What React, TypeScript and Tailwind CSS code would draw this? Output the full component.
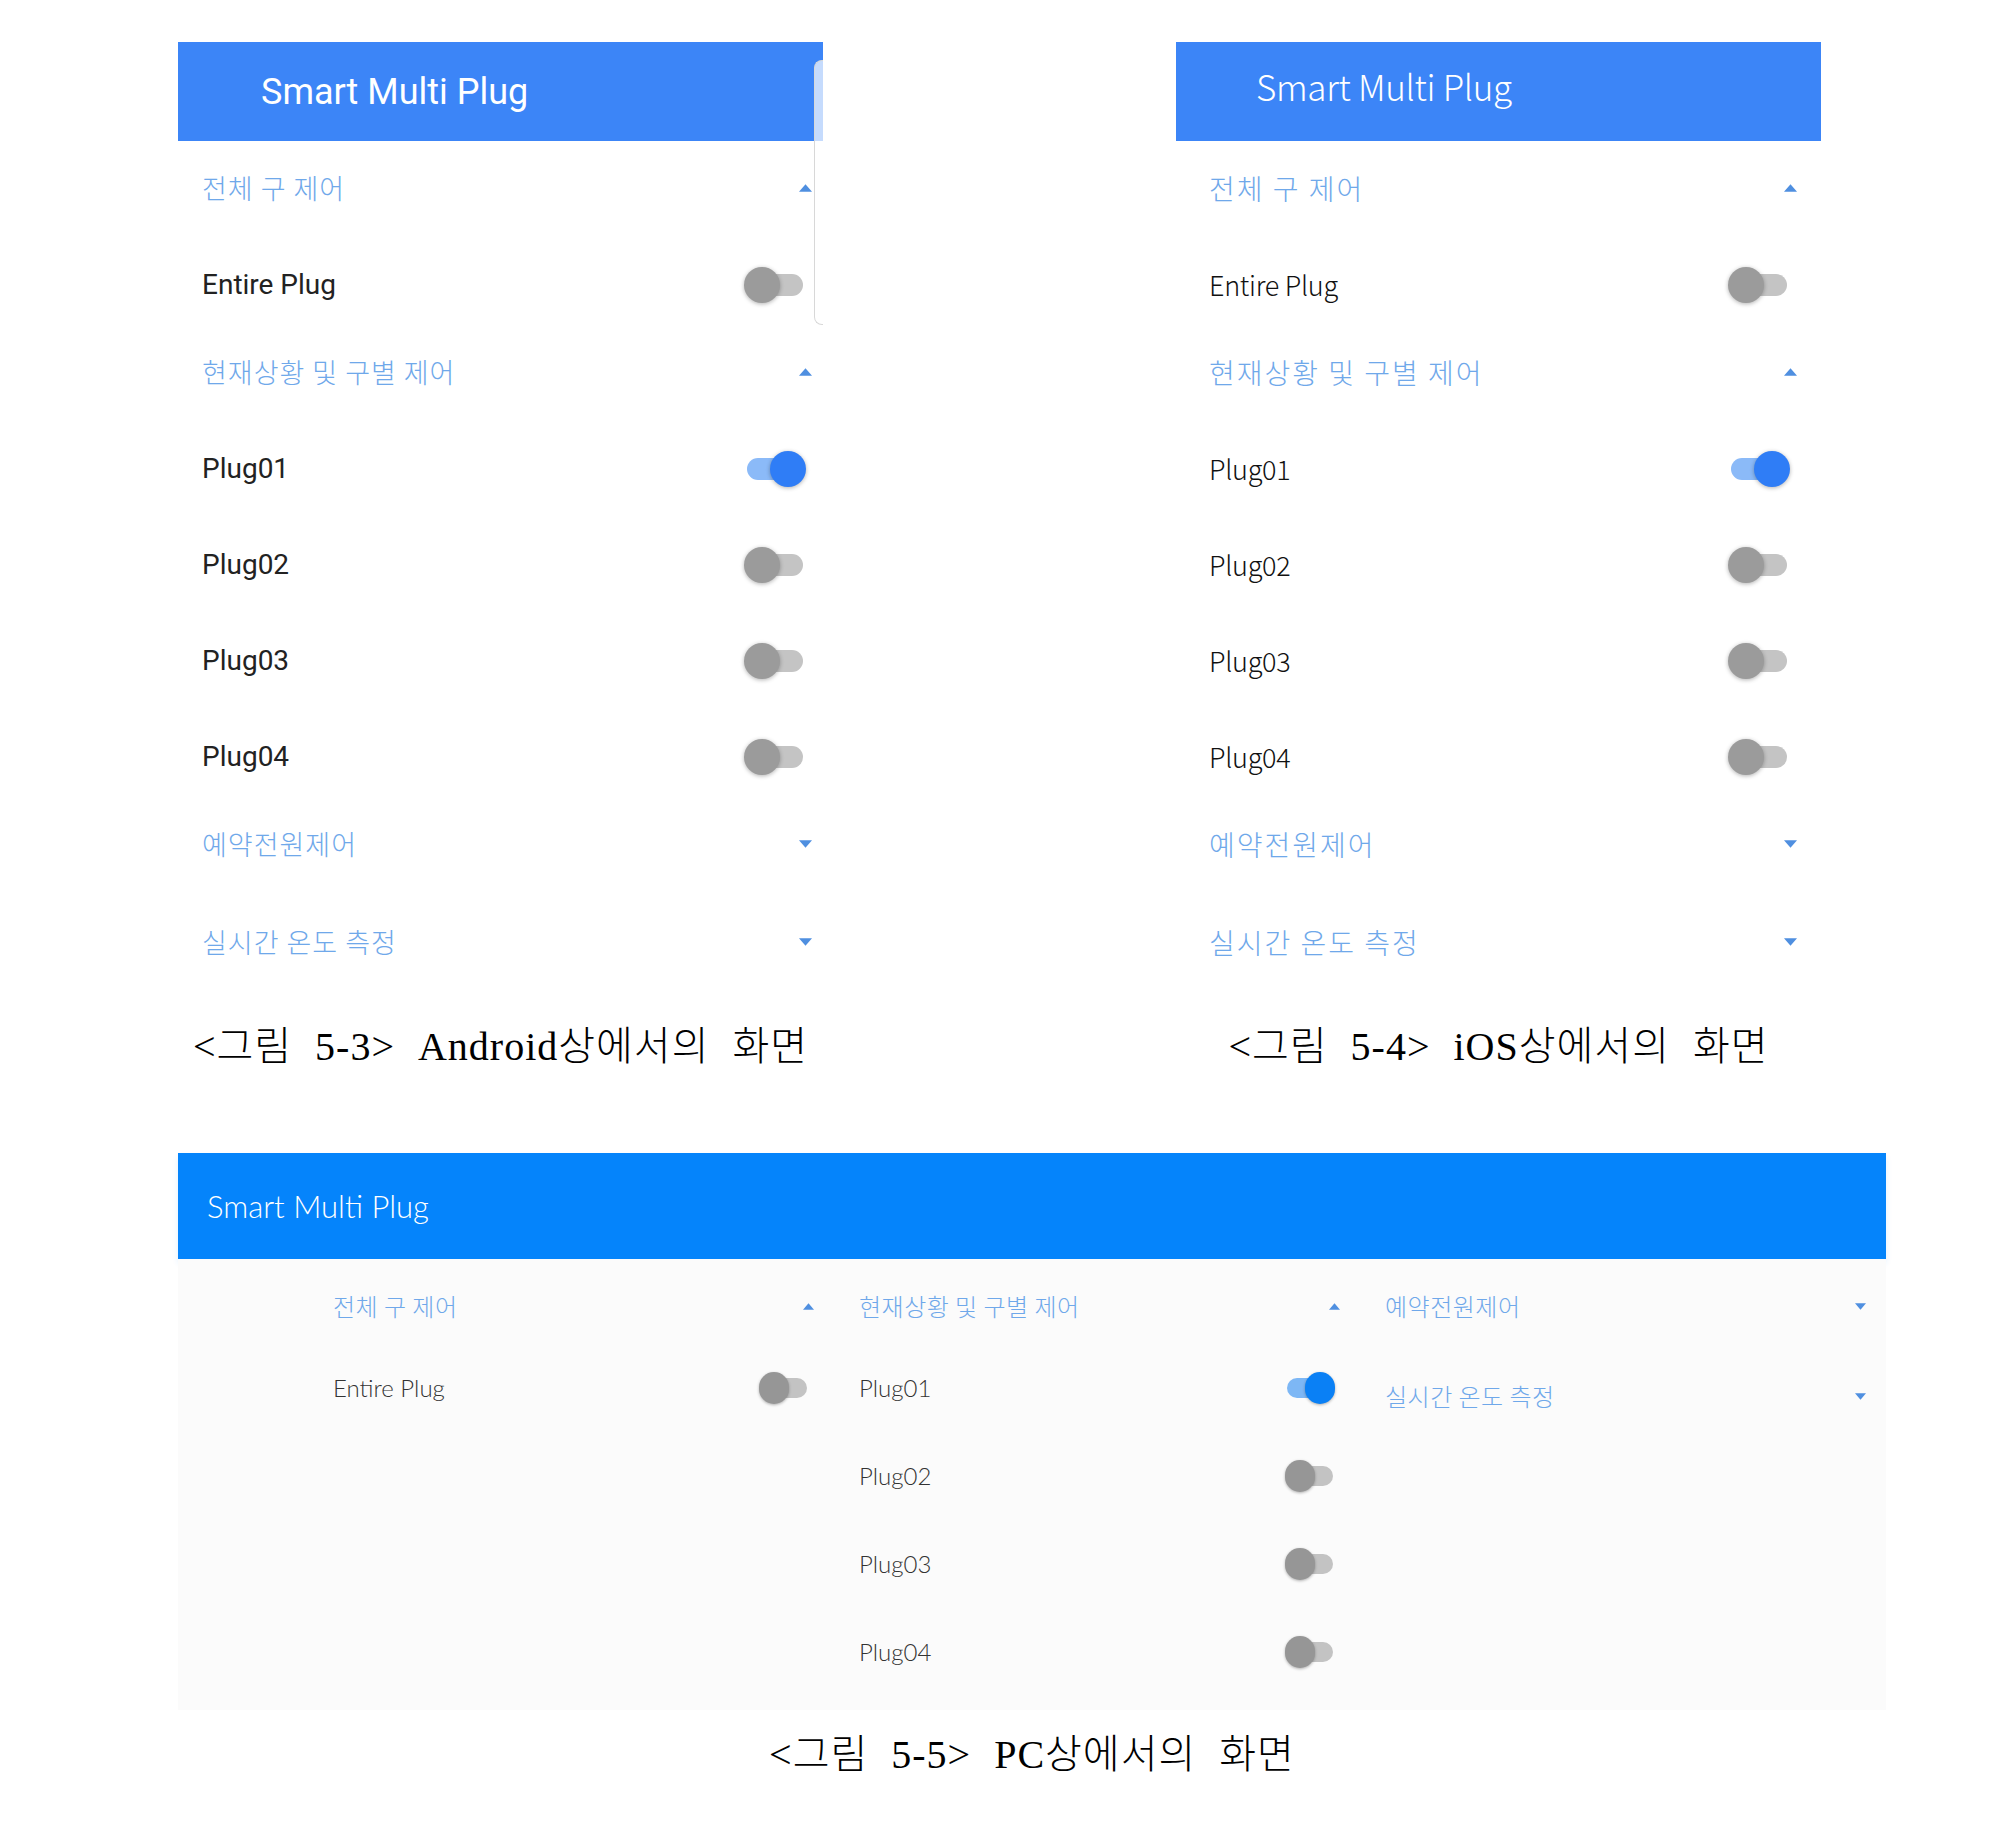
import React from "react";

type Platform = "android" | "ios";

const captionFont = "font-['Liberation_Serif','Noto_Sans_CJK_KR',serif]";

const Arrow = ({ up, small }: { up?: boolean; small?: boolean }) => {
  const w = small ? 11 : 13;
  const h = small ? 7 : 8;
  return (
    <svg width={w} height={h} viewBox="0 0 12 7" className="shrink-0">
      {up ? (
        <polygon points="0,7 6,0 12,7" fill="#4f8fe0" />
      ) : (
        <polygon points="0,0 12,0 6,7" fill="#4f8fe0" />
      )}
    </svg>
  );
};

const Toggle = ({ on, pc }: { on?: boolean; pc?: boolean }) => {
  if (pc) {
    return (
      <div className="relative h-[32px] w-[50px] shrink-0">
        <div
          className={`absolute inset-x-[2px] top-[6px] h-[20px] rounded-full ${
            on ? "bg-[#7db7f5]" : "bg-[#c3c3c3]"
          }`}
        />
        <div
          className={`absolute top-0 h-[32px] w-[30px] rounded-full shadow-[0_1px_3px_rgba(0,0,0,0.3)] ${
            on ? "right-0 bg-[#0a80f5]" : "left-0 bg-[#969696]"
          }`}
        />
      </div>
    );
  }
  return (
    <div className="relative h-[36px] w-[62px] shrink-0">
      <div
        className={`absolute inset-x-[3px] top-[7px] h-[22px] rounded-full ${
          on ? "bg-[#8bbaf8]" : "bg-[#c4c4c4]"
        }`}
      />
      <div
        className={`absolute top-0 h-[36px] w-[36px] rounded-full shadow-[0_1px_4px_rgba(0,0,0,0.3)] ${
          on ? "right-0 bg-[#2f7df6]" : "left-0 bg-[#9b9b9b]"
        }`}
      />
    </div>
  );
};

const MobilePanel = ({ platform }: { platform: Platform }) => {
  const ios = platform === "ios";
  const pad = ios ? "pl-[33px] pr-[31px]" : "pl-[24px] pr-[17px]";
  const arrowPad = ios ? "pl-[33px] pr-[24px]" : "pl-[24px] pr-[11px]";
  const itemFont = ios
    ? "font-['Noto_Sans_CJK_KR',sans-serif] text-[27px] font-light text-[#111] tracking-[-0.3px]"
    : "font-['Roboto',sans-serif] text-[28px] text-[#222]";
  const sectionFont = ios
    ? "text-[28px] font-light tracking-[2px]"
    : "text-[27px] font-light tracking-[1px]";

  const Section = ({ label, open }: { label: string; open?: boolean }) => (
    <div
      className={`flex items-center justify-between ${arrowPad} ${
        open ? "h-[88px] pb-[10px]" : "h-[98px] pb-[20px]"
      }`}
    >
      <span
        className={`font-['Noto_Sans_CJK_KR',sans-serif] text-[#6fa8ea] ${sectionFont}`}
      >
        {label}
      </span>
      <Arrow up={open} />
    </div>
  );

  const Item = ({ label, on }: { label: string; on?: boolean }) => (
    <div className={`flex h-[96px] items-center justify-between ${pad}`}>
      <span className={itemFont}>{label}</span>
      <Toggle on={on} />
    </div>
  );

  return (
    <div className="relative w-[645px] bg-white">
      <div
        className={`flex h-[99px] bg-[#3c85f7] text-white ${
          ios
            ? "items-center pb-[10px] pl-[80px] font-['Noto_Sans_CJK_KR',sans-serif] text-[35px] font-light tracking-[-0.3px]"
            : "items-center pl-[83px] font-['Roboto',sans-serif] text-[36px]"
        }`}
      >
        Smart Multi Plug
      </div>
      <div className="pt-[8px]">
        <Section label="전체 구 제어" open />
        <Item label="Entire Plug" />
        <Section label="현재상황 및 구별 제어" open />
        <Item label="Plug01" on />
        <Item label="Plug02" />
        <Item label="Plug03" />
        <Item label="Plug04" />
        <Section label="예약전원제어" />
        <Section label="실시간 온도 측정" />
      </div>
      {!ios && (
        <div className="absolute right-0 top-[18px] h-[265px] w-[9px] rounded-l-[8px] border border-r-0 border-[#d8d8d8] bg-white/70" />
      )}
    </div>
  );
};

const PcSection = ({ label, open }: { label: string; open?: boolean }) => (
  <div
    className={`flex items-center justify-between pl-[25px] pr-[20px] ${
      open ? "h-[76px]" : "h-[90px] pb-[14px]"
    }`}
  >
    <span className="font-['Noto_Sans_CJK_KR',sans-serif] text-[24px] font-light tracking-[0.5px] text-[#6fa8ea]">
      {label}
    </span>
    <Arrow up={open} small />
  </div>
);

const PcItem = ({ label, on }: { label: string; on?: boolean }) => (
  <div className="flex h-[88px] items-center justify-between pl-[25px] pr-[25px]">
    <span className="font-['Lato',sans-serif] text-[24px] font-light text-[#333]">
      {label}
    </span>
    <Toggle on={on} pc />
  </div>
);

const PcPanel = () => (
  <div className="w-[1708px]">
    <div className="flex h-[106px] items-center bg-[#0584fb] pl-[29px] font-['Lato',sans-serif] text-[31px] font-light text-white shadow-[0_4px_6px_rgba(0,132,255,0.12)]">
      Smart Multi Plug
    </div>
    <div className="grid grid-cols-3 bg-[#fbfbfb] pb-[14px] pl-[130px] pt-[9px]">
      <div>
        <PcSection label="전체 구 제어" open />
        <PcItem label="Entire Plug" />
      </div>
      <div>
        <PcSection label="현재상황 및 구별 제어" open />
        <PcItem label="Plug01" on />
        <PcItem label="Plug02" />
        <PcItem label="Plug03" />
        <PcItem label="Plug04" />
      </div>
      <div>
        <PcSection label="예약전원제어" />
        <PcSection label="실시간 온도 측정" />
      </div>
    </div>
  </div>
);

const Caption = ({ children, className }: { children: React.ReactNode; className?: string }) => (
  <p
    className={`text-center text-[40px] font-light leading-[48px] tracking-[1px] text-black [word-spacing:0.3em] ${captionFont} ${className ?? ""}`}
  >
    {children}
  </p>
);

export default function App() {
  return (
    <div className="min-h-[1822px] w-[1994px] bg-white pl-[178px] pt-[42px]">
      <div className="flex gap-[353px]">
        <div className="w-[645px]">
          <MobilePanel platform="android" />
          <Caption className="mt-[22px]">&lt;그림 5-3&gt; Android상에서의 화면</Caption>
        </div>
        <div className="w-[645px]">
          <MobilePanel platform="ios" />
          <Caption className="mt-[22px]">&lt;그림 5-4&gt; iOS상에서의 화면</Caption>
        </div>
      </div>
      <div className="mt-[82px] w-[1708px]">
        <PcPanel />
        <Caption className="mt-[21px]">&lt;그림 5-5&gt; PC상에서의 화면</Caption>
      </div>
    </div>
  );
}
